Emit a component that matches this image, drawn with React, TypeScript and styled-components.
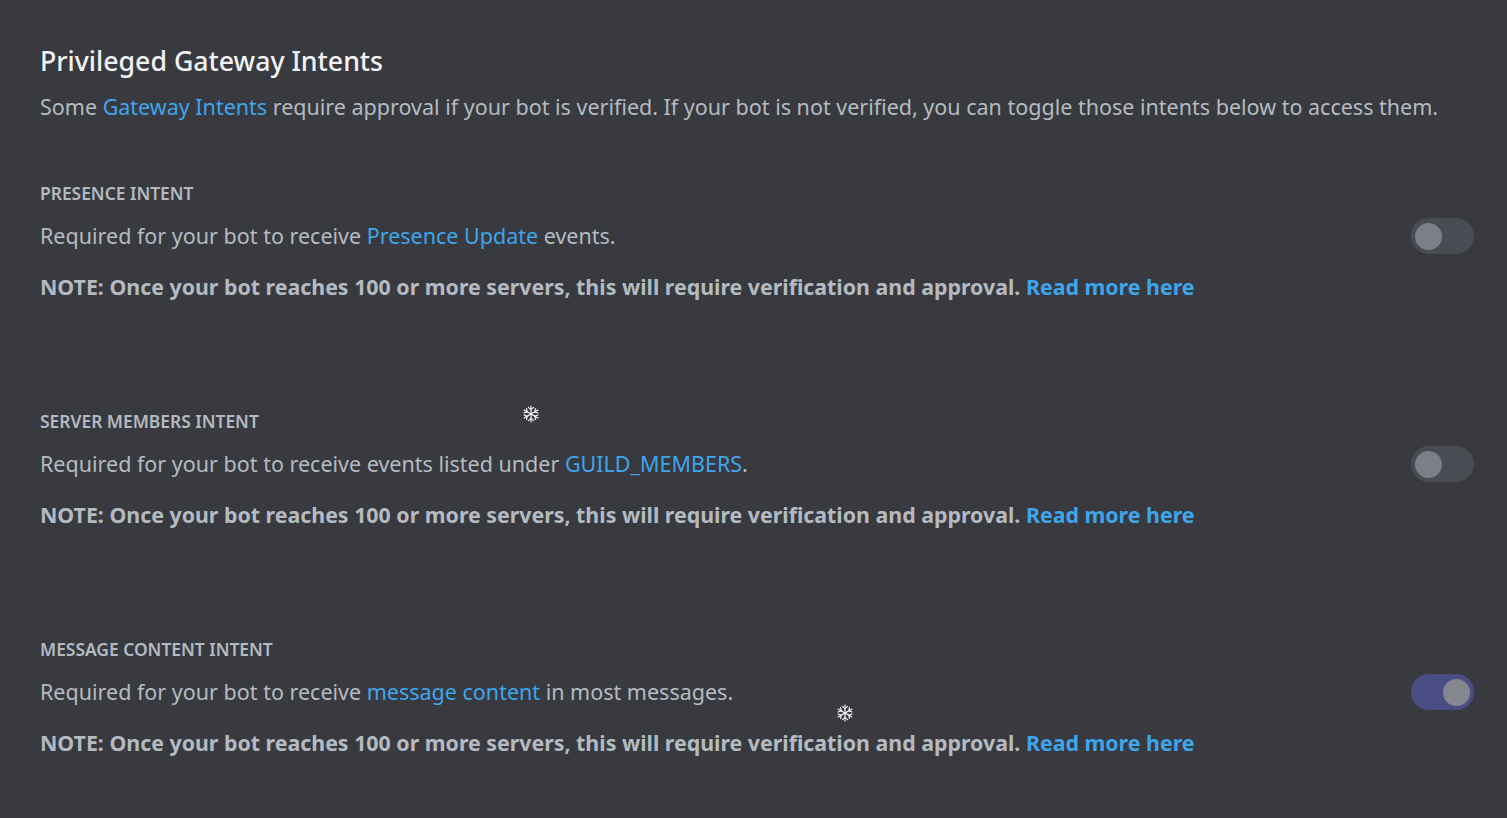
import React, { useState } from 'react'
import styled, { createGlobalStyle } from 'styled-components'

const GlobalStyle = createGlobalStyle`
  html, body {
    margin: 0;
    padding: 0;
    background: #383a40;
    font-family: "Noto Sans", "Open Sans", sans-serif;
  }
`

const Page = styled.div`
  position: relative;
  min-height: 818px;
  box-sizing: border-box;
  padding: 43px 33px 0 40px;
  background: #383a40;
  overflow: hidden;
`

const Title = styled.h1`
  margin: 0;
  font-size: 26.7px;
  line-height: 36px;
  font-weight: 500;
  color: #f2f3f5;
`

const Lead = styled.p`
  margin: 14px 0 0;
  font-size: 21.5px;
  line-height: 28px;
  color: #b5bac1;
`

const Link = styled.a<{ $bold?: boolean }>`
  color: #3fa5ea;
  text-decoration: none;
  font-weight: ${({ $bold }) => ($bold ? 700 : 400)};
`

const Sections = styled.div`
  display: flex;
  flex-direction: column;
  gap: 110px;
  margin-top: 62px;
`

const Section = styled.section`
  display: flex;
  flex-direction: column;
`

const Label = styled.h3`
  margin: 0;
  font-size: 17.4px;
  line-height: 20px;
  font-weight: 600;
  color: #b5bac1;
  text-transform: uppercase;
`

const Row = styled.div`
  display: flex;
  align-items: center;
  justify-content: space-between;
  margin-top: 15px;
`

const Desc = styled.p`
  margin: 0;
  font-size: 21.5px;
  line-height: 28px;
  color: #b5bac1;
`

const Note = styled.p`
  margin: 19px 0 0;
  font-size: 21.35px;
  line-height: 28px;
  font-weight: 700;
  color: #b5bac1;
`

const Track = styled.button<{ $on: boolean }>`
  position: relative;
  width: 63px;
  height: 36px;
  border: none;
  padding: 0;
  border-radius: 18px;
  cursor: pointer;
  background: ${({ $on }) => ($on ? '#4a4e85' : '#4a4c53')};
  transition: background 0.2s;
`

const Knob = styled.span<{ $on: boolean }>`
  position: absolute;
  top: 5px;
  left: ${({ $on }) => ($on ? '32px' : '4px')};
  width: 27px;
  height: 27px;
  border-radius: 50%;
  background: ${({ $on }) => ($on ? '#85878e' : '#7c7f87')};
  transition: left 0.2s;
`

const FlakeBox = styled.svg<{ $x: number; $y: number }>`
  position: absolute;
  left: ${({ $x }) => $x - 9}px;
  top: ${({ $y }) => $y - 9}px;
  width: 18px;
  height: 18px;
  pointer-events: none;
`

const Flake = ({ x, y }: { x: number; y: number }) => (
  <FlakeBox $x={x} $y={y} viewBox="-9 -9 18 18">
    <g stroke="#ffffff" strokeWidth="1.1" strokeLinecap="round" fill="none">
      {[0, 60, 120].map((a) => (
        <line key={a} x1="0" y1="-8" x2="0" y2="8" transform={`rotate(${a})`} />
      ))}
      {[0, 60, 120, 180, 240, 300].map((a) => (
        <path key={a} d="M-2.6 -6.6 L0 -4.4 L2.6 -6.6" transform={`rotate(${a})`} />
      ))}
    </g>
  </FlakeBox>
)

type Intent = {
  key: string
  label: string
  before: string
  link: string
  after: string
  on: boolean
}

const intents: Intent[] = [
  {
    key: 'presence',
    label: 'Presence Intent',
    before: 'Required for your bot to receive ',
    link: 'Presence Update',
    after: ' events.',
    on: false,
  },
  {
    key: 'members',
    label: 'Server Members Intent',
    before: 'Required for your bot to receive events listed under ',
    link: 'GUILD_MEMBERS',
    after: '.',
    on: false,
  },
  {
    key: 'content',
    label: 'Message Content Intent',
    before: 'Required for your bot to receive ',
    link: 'message content',
    after: ' in most messages.',
    on: true,
  },
]

const Toggle = ({ initial }: { initial: boolean }) => {
  const [on, setOn] = useState(initial)
  return (
    <Track $on={on} onClick={() => setOn(!on)} aria-pressed={on}>
      <Knob $on={on} />
    </Track>
  )
}

const App = () => {
  return (
    <Page>
      <GlobalStyle />
      <Title>Privileged Gateway Intents</Title>
      <Lead>
        Some <Link href="#">Gateway Intents</Link> require approval if your bot is verified. If your bot is not
        verified, you can toggle those intents below to access them.
      </Lead>
      <Sections>
        {intents.map((intent) => (
          <Section key={intent.key}>
            <Label>{intent.label}</Label>
            <Row>
              <Desc>
                {intent.before}
                <Link href="#">{intent.link}</Link>
                {intent.after}
              </Desc>
              <Toggle initial={intent.on} />
            </Row>
            <Note>
              NOTE: Once your bot reaches 100 or more servers, this will require verification and approval.{' '}
              <Link href="#" $bold>
                Read more here
              </Link>
            </Note>
          </Section>
        ))}
      </Sections>
      <Flake x={531} y={414} />
      <Flake x={845} y={713} />
    </Page>
  )
}

export default App
